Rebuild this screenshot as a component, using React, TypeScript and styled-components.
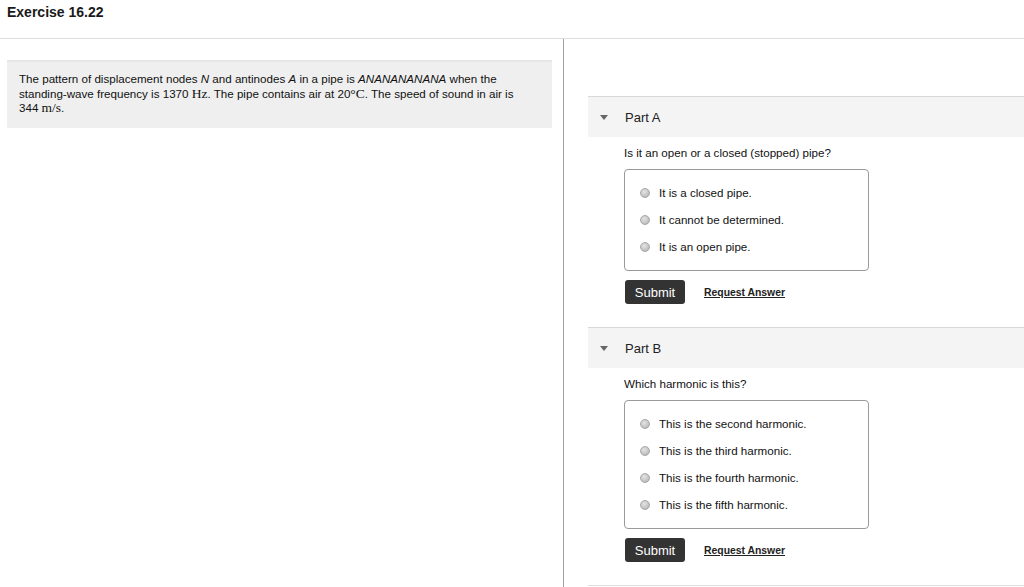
import React from "react";
import styled, { createGlobalStyle } from "styled-components";

const Global = createGlobalStyle`
  html, body { margin: 0; padding: 0; background: #fff; }
  body { font-family: "Liberation Sans", Arial, sans-serif; color: #111; }
`;

const Page = styled.div`
  width: 1024px;
  height: 587px;
  overflow: hidden;
  display: flex;
  flex-direction: column;
`;

const TopBar = styled.header`
  height: 39px;
  border-bottom: 1px solid #dedede;
  box-sizing: border-box;
  padding: 4px 0 0 7px;
  flex: none;
`;

const Title = styled.h1`
  margin: 0;
  font-size: 14px;
  font-weight: bold;
  color: #1a1a1a;
  line-height: 16px;
`;

const Body = styled.div`
  flex: 1;
  display: grid;
  grid-template-columns: 564px 1fr;
`;

const LeftCol = styled.section`
  border-right: 1px solid #a0a0a0;
  padding: 21px 11px 0 7px;
`;

const Prompt = styled.div`
  background: #efefef;
  border-top: 2px solid #e6e6e6;
  padding: 10px 28px 12px 12px;
  font-size: 11.6px;
  line-height: 14.5px;
  color: #111;
  box-sizing: border-box;
  height: 68px;
`;

const MathText = styled.span`
  font-family: "Liberation Serif", "Times New Roman", serif;
  font-size: 13.5px;
`;

const RightCol = styled.section`
  padding: 57px 0 0 24px;
  display: flex;
  flex-direction: column;
`;

const Part = styled.div`
  padding-bottom: 23px;
`;

const PartHeader = styled.div`
  height: 41px;
  box-sizing: border-box;
  border-top: 1px solid #d8d8d8;
  background: #f4f4f4;
  display: flex;
  align-items: center;
  padding-left: 12px;
  font-size: 13px;
  color: #222;
`;

const Caret = styled.span`
  width: 0;
  height: 0;
  border-left: 4px solid transparent;
  border-right: 4px solid transparent;
  border-top: 5px solid #666;
  margin-right: 17px;
  margin-top: 1px;
`;

const Content = styled.div`
  padding-left: 36px;
`;

const Question = styled.p`
  margin: 9px 0 9px 0;
  font-size: 11.6px;
  line-height: 14px;
  color: #111;
`;

const Choices = styled.div`
  width: 245px;
  box-sizing: border-box;
  border: 1px solid #9a9a9a;
  border-radius: 4px;
  padding: 9px 0 10px 15px;
`;

const Choice = styled.label`
  display: flex;
  align-items: center;
  height: 27px;
  font-size: 11.6px;
  color: #111;
`;

const Radio = styled.span`
  width: 10px;
  height: 10px;
  border-radius: 50%;
  box-sizing: border-box;
  border: 1px solid #a8a8a8;
  background: radial-gradient(circle at 40% 35%, #e4e4e4 0%, #c4c4c4 60%, #aaa 100%);
  margin-right: 9px;
  flex: none;
`;

const Actions = styled.div`
  display: flex;
  align-items: center;
  margin-top: 9px;
  gap: 19px;
`;

const SubmitButton = styled.button`
  width: 60px;
  height: 24px;
  margin-left: 1px;
  border: none;
  border-radius: 3px;
  background: #333;
  color: #fff;
  font-family: "Liberation Sans", Arial, sans-serif;
  font-size: 13px;
  padding: 0;
`;

const RequestLink = styled.a`
  font-size: 10.4px;
  font-weight: bold;
  color: #222;
  text-decoration: underline;
`;

const Divider = styled.div`
  border-top: 1px solid #dedede;
`;

type PartProps = { name: string; question: string; options: string[] };

const PartBlock = ({ name, question, options }: PartProps) => (
  <Part>
    <PartHeader>
      <Caret />
      {name}
    </PartHeader>
    <Content>
      <Question>{question}</Question>
      <Choices>
        {options.map((o) => (
          <Choice key={o}>
            <Radio />
            {o}
          </Choice>
        ))}
      </Choices>
      <Actions>
        <SubmitButton>Submit</SubmitButton>
        <RequestLink>Request Answer</RequestLink>
      </Actions>
    </Content>
  </Part>
);

export default function App() {
  return (
    <Page>
      <Global />
      <TopBar>
        <Title>Exercise 16.22</Title>
      </TopBar>
      <Body>
        <LeftCol>
          <Prompt>
            The pattern of displacement nodes <i>N</i> and antinodes <i>A</i> in a pipe is{" "}
            <i>ANANANANANA</i> when the standing-wave frequency is 1370 <MathText>Hz</MathText>. The
            pipe contains air at 20<MathText>°C</MathText>. The speed of sound in air is 344{" "}
            <MathText>m/s</MathText>.
          </Prompt>
        </LeftCol>
        <RightCol>
          <PartBlock
            name="Part A"
            question="Is it an open or a closed (stopped) pipe?"
            options={["It is a closed pipe.", "It cannot be determined.", "It is an open pipe."]}
          />
          <PartBlock
            name="Part B"
            question="Which harmonic is this?"
            options={[
              "This is the second harmonic.",
              "This is the third harmonic.",
              "This is the fourth harmonic.",
              "This is the fifth harmonic.",
            ]}
          />
          <Divider />
        </RightCol>
      </Body>
    </Page>
  );
}
